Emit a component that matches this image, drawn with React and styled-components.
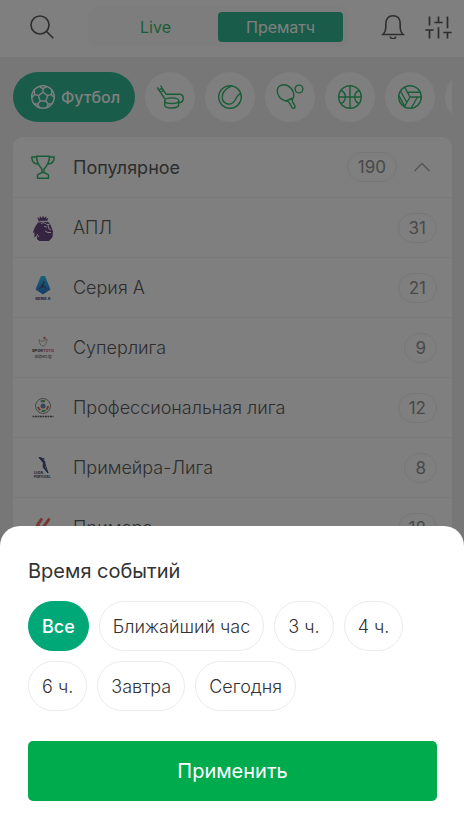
import React, { useState } from "react";
import styled, { createGlobalStyle, css } from "styled-components";

const GlobalStyle = createGlobalStyle`
  *, *::before, *::after { box-sizing: border-box; }
  body {
    margin: 0;
    background: #ebebeb;
    color: #333;
    font-family: Inter, "Liberation Sans", sans-serif;
    font-size: 18px;
    font-weight: 300;
  }
  button {
    font: inherit;
    color: inherit;
    border: 0;
    padding: 0;
    background: none;
    cursor: pointer;
  }
`;

const Page = styled.div`
  min-height: 100vh;
`;

const Header = styled.header`
  display: flex;
  align-items: center;
  height: 57px;
  padding: 0 12px 4px 30px;
  background: #fff;
`;

const IconButton = styled.button`
  display: flex;
  flex: none;
`;

const Actions = styled.div`
  display: flex;
  gap: 20px;
`;

const Modes = styled.nav`
  display: flex;
  flex: 1;
  height: 40px;
  margin: 0 33px 0 34px;
  padding: 5px;
  border-radius: 8px;
  background: #fbfbfb;
`;

const Mode = styled.button`
  flex: 1;
  border-radius: 4px;
  font-size: 16px;
  font-weight: 400;
  color: ${(p) => (p.$active ? "#fff" : "#00a94f")};
  background: ${(p) => (p.$active ? "#00a878" : "transparent")};
`;

const Sports = styled.nav`
  display: flex;
  gap: 10px;
  margin: 15px 12px 15px 13px;
  overflow: hidden;
`;

const Sport = styled.button`
  display: flex;
  flex: none;
  align-items: center;
  justify-content: center;
  gap: 6px;
  min-width: 50px;
  height: 50px;
  border-radius: 25px;
  color: #00a94f;
  background: #fff;
  ${(p) =>
    p.$active &&
    css`
      padding: 0 15px 0 18px;
      color: #fff;
      background: #00a878;
      font-size: 16px;
      font-weight: 500;
    `}
`;

const Card = styled.section`
  margin: 0 12px 0 13px;
  border-radius: 10px;
  background: #fff;
`;

const GroupHeader = styled.button`
  display: flex;
  align-items: center;
  width: 100%;
  height: 61px;
  padding: 0 22px 0 18px;
  border-bottom: 1px solid #f0f0f0;
  font-weight: 400;
  text-align: left;
`;

const Leagues = styled.ul`
  margin: 0;
  padding: 0;
  list-style: none;
`;

const League = styled.a`
  display: flex;
  align-items: center;
  height: 60px;
  padding: 0 15px 0 18px;
  border-bottom: 1px solid #f0f0f0;
  color: inherit;
  text-decoration: none;
`;

const Name = styled.span`
  flex: 1;
  margin-left: 18px;
`;

const Count = styled.span`
  height: 30px;
  padding: 0 10px;
  border: 1px solid #ebebeb;
  border-radius: 15px;
  color: #777;
  font-size: 17px;
  font-weight: 400;
  line-height: 28px;
`;

const Chevron = styled.svg`
  margin-left: 17px;
  color: #999;
`;

const Trophy = styled.span`
  display: flex;
  color: #00a94f;
`;

const Overlay = styled.div`
  position: fixed;
  inset: 0;
  display: flex;
  align-items: flex-end;
  background: rgba(42, 42, 42, 0.6);
`;

const Sheet = styled.form`
  flex: 1;
  padding: 30px 27px 15px 28px;
  border-radius: 20px 20px 0 0;
  background: #fff;
`;

const Title = styled.h2`
  margin: 0 0 15px;
  font-size: 20px;
  font-weight: 400;
  line-height: 30px;
`;

const Periods = styled.div`
  display: flex;
  flex-wrap: wrap;
  gap: 10px;
`;

const Period = styled.button`
  height: 50px;
  padding: 0 13px;
  border: 1px solid ${(p) => (p.$active ? "#00a878" : "#ebebeb")};
  border-radius: 25px;
  color: ${(p) => (p.$active ? "#fff" : "#333")};
  background: ${(p) => (p.$active ? "#00a878" : "#fff")};
  font-weight: ${(p) => (p.$active ? 500 : 300)};
`;

const Apply = styled.button`
  display: block;
  width: 100%;
  height: 60px;
  margin-top: 30px;
  border-radius: 5px;
  color: #fff;
  background: #00ab4e;
  font-size: 20px;
  font-weight: 400;
`;

function Icon({ size = 24, box = 24, width = 1.4, children }) {
  return (
    <svg
      width={size}
      height={size}
      viewBox={`0 0 ${box} ${box}`}
      fill="none"
      stroke="currentColor"
      strokeWidth={width}
      strokeLinejoin="round"
      aria-hidden="true"
    >
      {children}
    </svg>
  );
}

const icons = {
  football: (
    <Icon>
      <circle cx="12" cy="12" r="11.3" />
      <path d="M12 7.3l4.6 3.3-1.8 5.4H9.2l-1.8-5.4zM12 7.3V3.6M16.6 10.6l3.7-1.2M14.8 16l2.4 3M9.2 16l-2.4 3M7.4 10.6L3.7 9.4M8 1.4l4 2.2 4-2.2M20.9 5l-.6 4.4 3 3M20.6 19l-3.4 0-1.6 3.6M8.4 22.6L6.8 19H3.4M.8 12.4l2.9-3L3.1 5" />
    </Icon>
  ),
  hockey: (
    <Icon size={28} box={28}>
      <path d="M1.200 4.500L9 16M4.500 2.500L10 11.200H24c4.500 0 4.200 8.300-.3 8.300h-1M2.700 7.200l3.400-2.100M4.200 9.500l3.400-2.100" />
      <ellipse cx="15.700" cy="17.700" rx="7" ry="2.800" />
      <path d="M8.700 17.700v4.300c0 4 14 4 14 0v-4.300" />
    </Icon>
  ),
  tennis: (
    <Icon>
      <circle cx="12" cy="12" r="11.300" />
      <path d="M13.500.900C8 3.500 4 7 4.200 12.400c.200 5.800 6.600 8.200 10.400 5.600 4.400-3 3.400-8.600 8.400-9.600" />
    </Icon>
  ),
  pingpong: (
    <Icon size={28} box={28}>
      <circle cx="23" cy="6" r="3.900" />
      <path d="M10 18C4.500 17 1.200 12.200 1.200 8 1.200 4.300 3.800 1.800 7.700 1.800c5.300 0 10.100 5 10.100 10.500 0 1-.2 1.900-.6 2.600M10 18l7.600-3.400M10 18c1.700 0 2.500.4 3.300 1.700l3 5.300c.8 1.300 3.500-.2 2.800-1.600L16.500 18.600c-.6-1.300-.2-2.300.7-3.700" />
    </Icon>
  ),
  basketball: (
    <Icon>
      <circle cx="12" cy="12" r="11.300" />
      <path d="M12 .700v22.600M.700 12h22.600M3.200 5.500c5.500 2.500 5.500 10.500 0 13M20.800 5.500c-5.500 2.500-5.500 10.500 0 13" />
    </Icon>
  ),
  volleyball: (
    <Icon>
      <circle cx="12" cy="12" r="11.300" />
      <path d="M12 12h11.300M12 12L6.500 1.900M12 12L6.300 21.800M9.500 7.200h12.800M2.500 6L8.800 17.500M.9 10.700l5.400 9.900M19.500 12l-6.200 11" />
    </Icon>
  ),
  search: (
    <Icon width={1.600}>
      <circle cx="10" cy="10" r="9" />
      <path d="M16.300 16.300l7 7" />
    </Icon>
  ),
  bell: (
    <Icon width={1.600}>
      <path d="M.700 19.500h22.600M2.500 19c1.700-1.800 2.300-4 2.300-6.500V9C4.800 3.800 7.300.800 12 .800s7.200 3 7.200 8.200v3.500c0 2.500.6 4.700 2.300 6.500M9.300 21.500c.4 3 5 3 5.400 0" />
    </Icon>
  ),
  sliders: (
    <svg width="27" height="24" viewBox="0 0 27 24" fill="none" stroke="currentColor" strokeWidth="1.700" aria-hidden="true">
      <path d="M4.500 1.500v9M.300 15h8.400M4.500 15v8.500M13.500 1.500v6M9.300 7.500h8.400M13.500 12.300v11.200M22.500 1.500v11.700M18.300 17.500h8.400M22.500 17.500v6" />
    </svg>
  ),
  cup: (
    <Icon width={1.500}>
      <path d="M5.500 1.200h13c0 6-2.500 9.500-5.500 13v3.300h-2v-3.300C8 10.700 5.500 7.200 5.500 1.200zM5.500 2H.8c0 4.200 2.200 6.800 6.200 7M18.500 2h4.700c0 4.200-2.200 6.800-6.200 7M11 17.500l-4.500 2.300v3.500h11v-3.500L13 17.500" />
    </Icon>
  ),
};

const logos = {
  epl: (
    <svg width="24" height="26" viewBox="0 0 24 26" aria-hidden="true">
      <g fill="#461a68">
        <path d="M6.300 1.800L8.500 4l.4-3 2 2.200L12 .500l1.200 2.600 1.900-1.800.3 2.700 2-1.500-1.200 3.700-8.500.5z" />
        <path d="M7 7.500l9.500-.8c2 1 3 2.500 3.500 4.500l2 5-.5 6-3.800 4.200H9l-3-2.200.2-4.200-2.900 2.700.2-5.200-1.700.3L4 12z" />
      </g>
      <path d="M8.500 6.300h8M10 9c2-2 4-1 5.500.300l3 .200M13 11.500l3 .500M17 10l1 4 2 1M14 16l3 1.500h3M8 22l-2-3" fill="none" stroke="#fff" strokeWidth="1" />
    </svg>
  ),
  serieA: (
    <svg width="24" height="26" viewBox="0 0 24 26" aria-hidden="true">
      <defs>
        <linearGradient id="serieBlue" x1="0" y1="0" x2="0" y2="1">
          <stop offset="0" stopColor="#00b5f0" />
          <stop offset="1" stopColor="#0059c0" />
        </linearGradient>
      </defs>
      <path d="M10 1h4l5.500 13.500-3 2-4.500 3-4.500-3-3-2z" fill="url(#serieBlue)" />
      <path d="M13.500 6l-1.500 3v3M8.500 14l1.500-2h4l1.500 2M10 12l2-3" fill="none" stroke="#10286a" strokeWidth="1.200" />
      <text x="12" y="25" textAnchor="middle" fontSize="4" fontWeight="800" fill="#10206a">SERIE A</text>
    </svg>
  ),
  super: (
    <svg width="24" height="24" viewBox="0 0 24 24" aria-hidden="true">
      <path d="M8 3c0 3 1 6 3 7h2c2-2 3-4 3-7-2 2-6 3-8 1" fill="none" stroke="#888" strokeWidth=".8" />
      <circle cx="13.500" cy="2" r="1.200" fill="#d7383e" />
      <text x="12" y="16" textAnchor="middle" fontSize="4" fontWeight="800" fill="#333">
        SPOR<tspan fill="#d7383e">TOTO</tspan>
      </text>
      <text x="12" y="22" textAnchor="middle" fontSize="4" fontStyle="italic" fontWeight="500" fill="#333">SüperLig</text>
    </svg>
  ),
  pro: (
    <svg width="24" height="24" viewBox="0 0 24 24" aria-hidden="true">
      <circle cx="12" cy="10" r="7.500" fill="none" stroke="#777" strokeWidth="1" />
      <circle cx="12" cy="10" r="5" fill="none" stroke="#d64a2f" strokeWidth="2" strokeDasharray="4 6.470" />
      <circle cx="12" cy="10" r="5" fill="none" stroke="#289b50" strokeWidth="2" strokeDasharray="4 11.700" strokeDashoffset="-5" />
      <circle cx="12" cy="10" r="2.500" fill="#4b6ca0" />
      <path d="M1.500 20.500h21" stroke="#444" strokeWidth="1.500" strokeDasharray="2 .500" />
    </svg>
  ),
  portugal: (
    <svg width="24" height="24" viewBox="0 0 24 24" aria-hidden="true">
      <path d="M8 1.500l3 .5 3 4-.5 5 3.500 6-5-6 .5-4zM12 2l1.500 1M14 8l3 9" fill="#142a60" stroke="#142a60" strokeWidth="1" />
      <text x="3" y="18" fontSize="4" fontWeight="800" fill="#142a60">LIGA</text>
      <text x="3" y="22" fontSize="3" fontWeight="800" fill="#142a60">PORTUGAL</text>
    </svg>
  ),
  laliga: (
    <svg width="24" height="24" viewBox="0 0 24 24" aria-hidden="true">
      <path d="M11 2.500L6.500 9c-1 2 1 3 3 1M18.500 2.500L11 13c-2 3 1 5 4 2" fill="none" stroke="#f04444" strokeWidth="3" />
    </svg>
  ),
};

const sports = [
  { id: "football", title: "Футбол" },
  { id: "hockey", title: "Хоккей" },
  { id: "tennis", title: "Теннис" },
  { id: "pingpong", title: "Настольный теннис" },
  { id: "basketball", title: "Баскетбол" },
  { id: "volleyball", title: "Волейбол" },
  { id: "more", title: "Ещё" },
];

const leagues = [
  { logo: "epl", name: "АПЛ", count: 31 },
  { logo: "serieA", name: "Серия А", count: 21 },
  { logo: "super", name: "Суперлига", count: 9 },
  { logo: "pro", name: "Профессиональная лига", count: 12 },
  { logo: "portugal", name: "Примейра-Лига", count: 8 },
  { logo: "laliga", name: "Примера", count: 18 },
];

const periods = ["Все", "Ближайший час", "3 ч.", "4 ч.", "6 ч.", "Завтра", "Сегодня"];

export default function App() {
  const [period, setPeriod] = useState("Все");
  return (
    <>
      <GlobalStyle />
      <Page>
        <Header>
          <IconButton aria-label="Поиск">{icons.search}</IconButton>
          <Modes>
            <Mode>Live</Mode>
            <Mode $active>Прематч</Mode>
          </Modes>
          <Actions>
            <IconButton aria-label="Уведомления">{icons.bell}</IconButton>
            <IconButton aria-label="Фильтры">{icons.sliders}</IconButton>
          </Actions>
        </Header>
        <Sports>
          {sports.map((s, i) => (
            <Sport key={s.id} $active={i === 0} aria-label={s.title}>
              {icons[s.id]}
              {i === 0 && s.title}
            </Sport>
          ))}
        </Sports>
        <Card>
          <GroupHeader aria-expanded="true">
            <Trophy>{icons.cup}</Trophy>
            <Name>Популярное</Name>
            <Count>190</Count>
            <Chevron width="16" height="10" viewBox="0 0 16 10" fill="none" stroke="currentColor" strokeWidth="1.500" aria-hidden="true">
              <path d="M.500 9L8 1.500 15.500 9" />
            </Chevron>
          </GroupHeader>
          <Leagues>
            {leagues.map((l) => (
              <li key={l.name}>
                <League href="#">
                  {logos[l.logo]}
                  <Name>{l.name}</Name>
                  <Count>{l.count}</Count>
                </League>
              </li>
            ))}
          </Leagues>
        </Card>
      </Page>
      <Overlay>
        <Sheet role="dialog" aria-labelledby="sheet-title" onSubmit={(e) => e.preventDefault()}>
          <Title id="sheet-title">Время событий</Title>
          <Periods>
            {periods.map((p) => (
              <Period key={p} type="button" $active={p === period} onClick={() => setPeriod(p)}>
                {p}
              </Period>
            ))}
          </Periods>
          <Apply type="submit">Применить</Apply>
        </Sheet>
      </Overlay>
    </>
  );
}
